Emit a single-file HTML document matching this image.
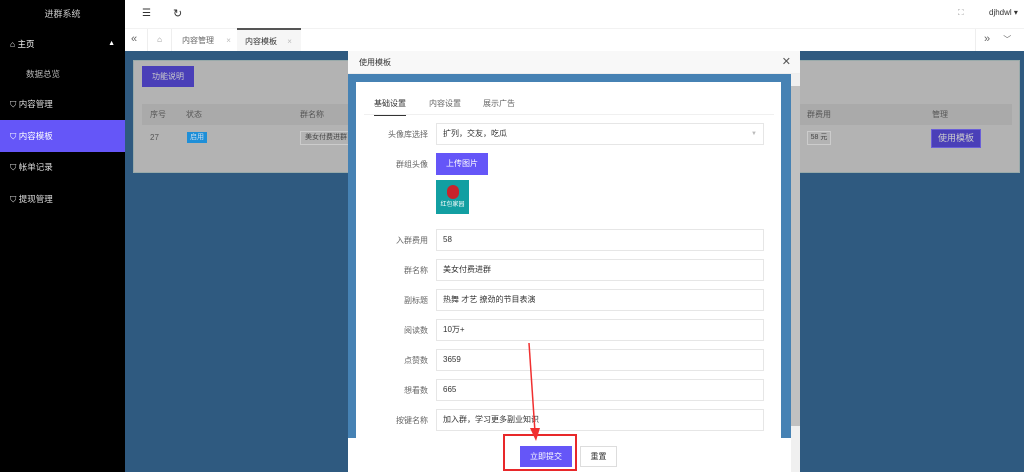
<!DOCTYPE html>
<html><head><meta charset="utf-8"><style>
*{margin:0;padding:0;box-sizing:border-box}
body{width:1024px;height:472px;overflow:hidden;position:relative;font-family:"Liberation Sans","Noto Sans CJK SC",sans-serif;font-size:8px;color:#333;background:#2f5a80}
.abs{position:absolute}
.side{left:0;top:0;width:125px;height:472px;background:#000;color:#ddd}
.side .it{position:absolute;left:0;width:125px;height:32px;line-height:32px;padding-left:26px;font-size:8.5px}
.top{left:125px;top:0;width:899px;height:28px;background:#fff}
.tabs{left:125px;top:28px;width:899px;height:23px;background:#fff;border-top:1px solid #f2f2f2}
.panel{left:133px;top:60px;width:887px;height:113px;background:#b3b3b3;border:1px solid #9aa}
.modal{left:348px;top:51px;width:452px;height:421px;background:#fff}
.mh{left:0;top:0;width:452px;height:23px;background:#f8f8f8;border-bottom:1px solid #eee;padding:6px 11px;font-size:8px}
.mb{left:0;top:23px;width:443px;height:364px;background:#4682b4}
.card{left:8px;top:8px;width:425px;height:360px;background:#fff}
.lab{position:absolute;width:72px;text-align:right;left:0;font-size:8px;color:#666}
.inp{position:absolute;left:80px;width:328px;height:22px;border:1px solid #e6e6e6;padding-left:6px;line-height:20px;font-size:8px;color:#333}
</style></head><body>
<div class="abs side">
<div style="text-align:center;line-height:28px;font-size:9px;color:#ccc">进群系统</div>
<div class="it" style="top:28px;padding-left:10px;color:#fff">⌂ 主页<span style="position:absolute;right:10px;font-size:7px">▲</span></div>
<div class="it" style="top:58px;color:#bbb">数据总览</div>
<div class="it" style="top:88px;padding-left:10px">⛉ 内容管理</div>
<div class="it" style="top:120px;padding-left:10px;background:#6556f8;color:#fff">⛉ 内容模板</div>
<div class="it" style="top:151px;padding-left:10px">⛉ 帐单记录</div>
<div class="it" style="top:183px;padding-left:10px">⛉ 提现管理</div>
</div>
<div class="abs top">
<div class="abs" style="left:17px;top:8px;font-size:10px">☰</div>
<div class="abs" style="left:48px;top:7px;font-size:11px">↻</div>
<div class="abs" style="left:833px;top:8px;font-size:8px;color:#999">⛶</div>
<div class="abs" style="left:864px;top:8px;font-size:8px">djhdwl ▾</div>
</div>
<div class="abs tabs">
<div class="abs" style="left:6px;top:4px;font-size:11px;color:#666">«</div>
<div class="abs" style="left:22px;top:0;width:25px;height:22px;border-left:1px solid #eee;border-right:1px solid #eee;text-align:center;line-height:22px;color:#888">⌂</div>
<div class="abs" style="left:57px;top:6px;color:#666">内容管理 <span style="color:#bbb;margin-left:10px">×</span></div>
<div class="abs" style="left:112px;top:-1px;width:64px;height:23px;background:#f6f6f6;border-top:2px solid #555;padding:6px 8px">内容模板 <span style="color:#bbb;margin-left:8px">×</span></div>
<div class="abs" style="left:850px;top:0;width:49px;height:22px;border-left:1px solid #eee;color:#666;font-size:11px;padding:4px 8px">» <span style="margin-left:10px;font-size:8px">﹀</span></div>
</div>
<div class="abs panel">
<div class="abs" style="left:8px;top:5px;width:52px;height:21px;background:#4a3fb8;color:#ccc;text-align:center;line-height:21px">功能说明</div>
<div class="abs" style="left:8px;top:43px;width:870px;height:21px;background:#aaa;line-height:21px;color:#555"><span style="margin-left:8px">序号</span><span style="margin-left:20px">状态</span><span style="position:absolute;left:158px">群名称</span><span style="position:absolute;left:665px">群费用</span><span style="position:absolute;left:790px">管理</span></div>
<div class="abs" style="left:16px;top:72px;color:#555">27</div>
<div class="abs" style="left:53px;top:71px;width:20px;height:11px;background:#1e8fd8;color:#cde;font-size:7px;text-align:center;line-height:11px">启用</div>
<div class="abs" style="left:166px;top:70px;width:50px;height:14px;border:1px solid #ccc;font-size:7px;line-height:12px;padding-left:4px;color:#444">美女付费进群</div>
<div class="abs" style="left:673px;top:70px;width:24px;height:14px;border:1px solid #ccc;font-size:7px;line-height:12px;text-align:center;color:#444">58 元</div>
<div class="abs" style="left:797px;top:68px;width:50px;height:19px;background:#4a3fb8;border:1px solid #6a5fd8;color:#ccc;font-size:9px;text-align:center;line-height:17px">使用模板</div>
</div>
<div class="abs modal">
<div class="abs mh">使用模板<span style="position:absolute;right:9px;top:4px;font-size:11px;color:#555">✕</span></div>
<div class="abs mb"><div class="abs card">
<div class="abs" style="left:18px;top:16px;font-size:8px;color:#333;border-bottom:2px solid #333;padding-bottom:5px">基础设置</div>
<div class="abs" style="left:73px;top:16px;color:#666">内容设置</div>
<div class="abs" style="left:127px;top:16px;color:#666">展示广告</div>
<div class="abs" style="left:8px;top:32px;width:410px;height:1px;background:#f0f0f0"></div>
<div class="lab" style="top:47px">头像库选择</div><div class="inp" style="top:41px">扩列，交友，吃瓜<span style="position:absolute;right:6px;color:#bbb;font-size:6px">▼</span></div>
<div class="lab" style="top:77px">群组头像</div>
<div class="abs" style="left:80px;top:71px;width:52px;height:22px;background:#6556f8;color:#fff;text-align:center;line-height:22px">上传图片</div>
<div class="abs" style="left:80px;top:98px;width:33px;height:34px;background:#129fa2"><div style="margin:5px auto 0;width:12px;height:14px;border-radius:6px;background:#c8232c"></div><div style="font-size:6px;color:#fff;text-align:center">红包家园</div></div>
<div class="lab" style="top:153px">入群费用</div><div class="inp" style="top:147px">58</div>
<div class="lab" style="top:183px">群名称</div><div class="inp" style="top:177px">美女付费进群</div>
<div class="lab" style="top:213px">副标题</div><div class="inp" style="top:207px">热舞 才艺 撩劲的节目表演</div>
<div class="lab" style="top:243px">阅读数</div><div class="inp" style="top:237px">10万+</div>
<div class="lab" style="top:273px">点赞数</div><div class="inp" style="top:267px">3659</div>
<div class="lab" style="top:303px">想看数</div><div class="inp" style="top:297px">665</div>
<div class="lab" style="top:333px">按键名称</div><div class="inp" style="top:327px">加入群，学习更多副业知识</div>
</div></div>
<div class="abs" style="left:443px;top:23px;width:9px;height:398px;background:#f0f0f0"><div style="margin-top:12px;height:340px;background:#c1c1c1"></div></div>
<div class="abs" style="left:172px;top:395px;width:52px;height:21px;background:#6556f8;color:#fff;text-align:center;line-height:21px">立即提交</div>
<div class="abs" style="left:232px;top:395px;width:37px;height:21px;border:1px solid #ddd;text-align:center;line-height:19px">重置</div>
</div>
<div class="abs" style="left:503px;top:434px;width:74px;height:37px;border:2px solid #e8282a"></div>
<svg class="abs" style="left:0;top:0" width="1024" height="472"><line x1="529" y1="343" x2="535" y2="432" stroke="#f03030" stroke-width="1.5"/><polygon points="530,428 540,428 536,441" fill="#f03030"/></svg>
</body></html>
